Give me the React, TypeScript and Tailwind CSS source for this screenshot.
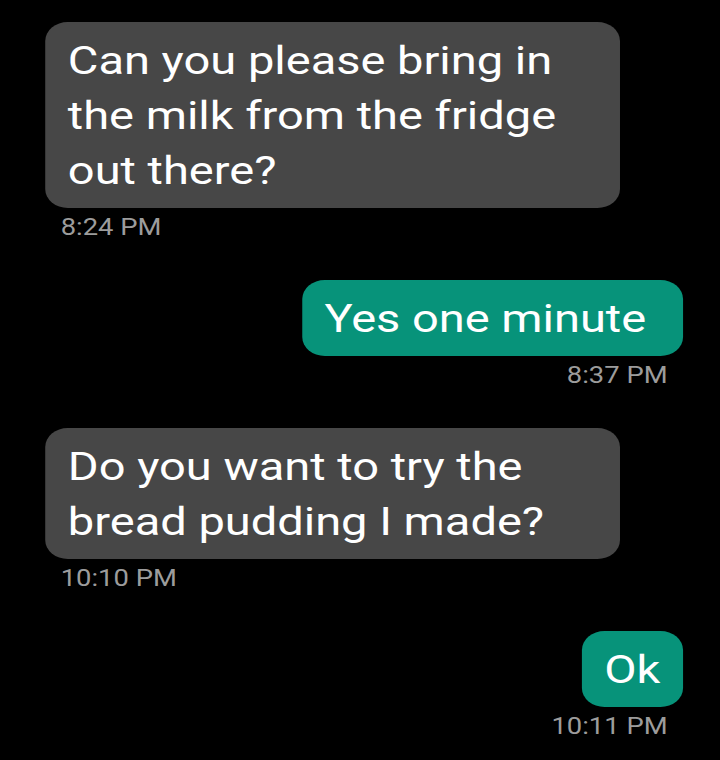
import React from "react";

type Msg = { text: string; time: string; mine: boolean; pad: string };

const msgs: Msg[] = [
  { text: "Can you please bring in the milk from the fridge out there?", time: "8:24 PM", mine: false, pad: "px-[19px]" },
  { text: "Yes one minute", time: "8:37 PM", mine: true, pad: "pl-[19px] pr-[31px]" },
  { text: "Do you want to try the bread pudding I made?", time: "10:10 PM", mine: false, pad: "px-[19px]" },
  { text: "Ok", time: "10:11 PM", mine: true, pad: "px-[19px]" },
];

export default function App() {
  return (
    <div className="w-[720px] h-[760px] bg-black overflow-hidden">
      <div
        className="w-[605px] origin-top-left scale-x-[1.19] pt-[22px] pl-[38px] pr-[31px] flex flex-col gap-[38px]"
        style={{ fontFamily: "Roboto, 'Noto Sans', sans-serif" }}
      >
        {msgs.map((m, i) => (
          <div key={i} className={`flex flex-col ${m.mine ? "items-end" : "items-start"}`}>
            <div
              className={`max-w-[483px] rounded-[19px] ${m.pad} pt-[11px] pb-[10px] text-[39.5px] leading-[55px] text-white ${
                m.mine ? "bg-[#07937a]" : "bg-[#474747]"
              }`}
            >
              {m.text}
            </div>
            <div className="mt-[6px] px-[13px] text-[23px] leading-[28px] text-[#9c9c9c]">{m.time}</div>
          </div>
        ))}
      </div>
    </div>
  );
}
